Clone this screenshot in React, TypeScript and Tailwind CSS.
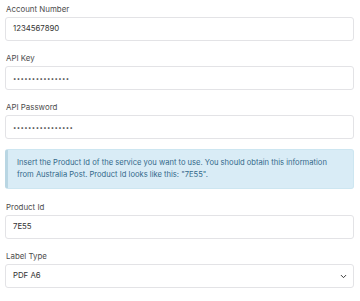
import { ChevronDown } from "lucide-react";

const FONT = { fontFamily: "Inter, 'Open Sans', sans-serif" };

function Label({ children }: { children: string }) {
  return <div className="h-[14px] leading-[14px] pl-[1px] text-[7.9px] text-[#4d4d4d]">{children}</div>;
}

function Field({ label, value, secret }: { label: string; value: string; secret?: boolean }) {
  return (
    <div>
      <Label>{label}</Label>
      <div className="mt-[1px] h-[24px] rounded-[3px] border border-[#e3e3e6] bg-white px-[7px] flex items-center text-[7.8px] text-[#333]">
        {secret ? <span className="text-[6px] tracking-[0.4px] text-[#444]">{value}</span> : value}
      </div>
    </div>
  );
}

export default function App() {
  return (
    <div className="w-[360px] h-[301px] bg-white pl-[5px] pr-[6px] pt-[2px] overflow-hidden flex flex-col gap-[10px]" style={FONT}>
      <Field label="Account Number" value="1234567890" />
      <Field label="API Key" value="•••••••••••••••" secret />
      <Field label="API Password" value="••••••••••••••••" secret />

      {/* Info */}
      <div className="mb-[1px] h-[40px] shrink-0 rounded-[3px] border border-[#cde6f1] border-l-[3px] border-l-[#b9d6e3] bg-[#d9ecf6] pl-[9px] pr-[6px] flex flex-col justify-center text-[7.6px] leading-[12px] text-[#33698a] whitespace-nowrap">
        <div>Insert the Product Id of the service you want to use. You should obtain this information</div>
        <div>from Australia Post. Product Id looks like this: "7E55".</div>
      </div>

      <Field label="Product Id" value="7E55" />

      <div>
        <Label>Label Type</Label>
        <div className="mt-[1px] h-[24px] rounded-[3px] border border-[#e3e3e6] bg-white pl-[7px] pr-[5px] flex items-center justify-between text-[7.8px] text-[#333]">
          <span>PDF A6</span>
          <ChevronDown size={9} strokeWidth={2.6} className="text-[#333]" />
        </div>
      </div>
    </div>
  );
}
